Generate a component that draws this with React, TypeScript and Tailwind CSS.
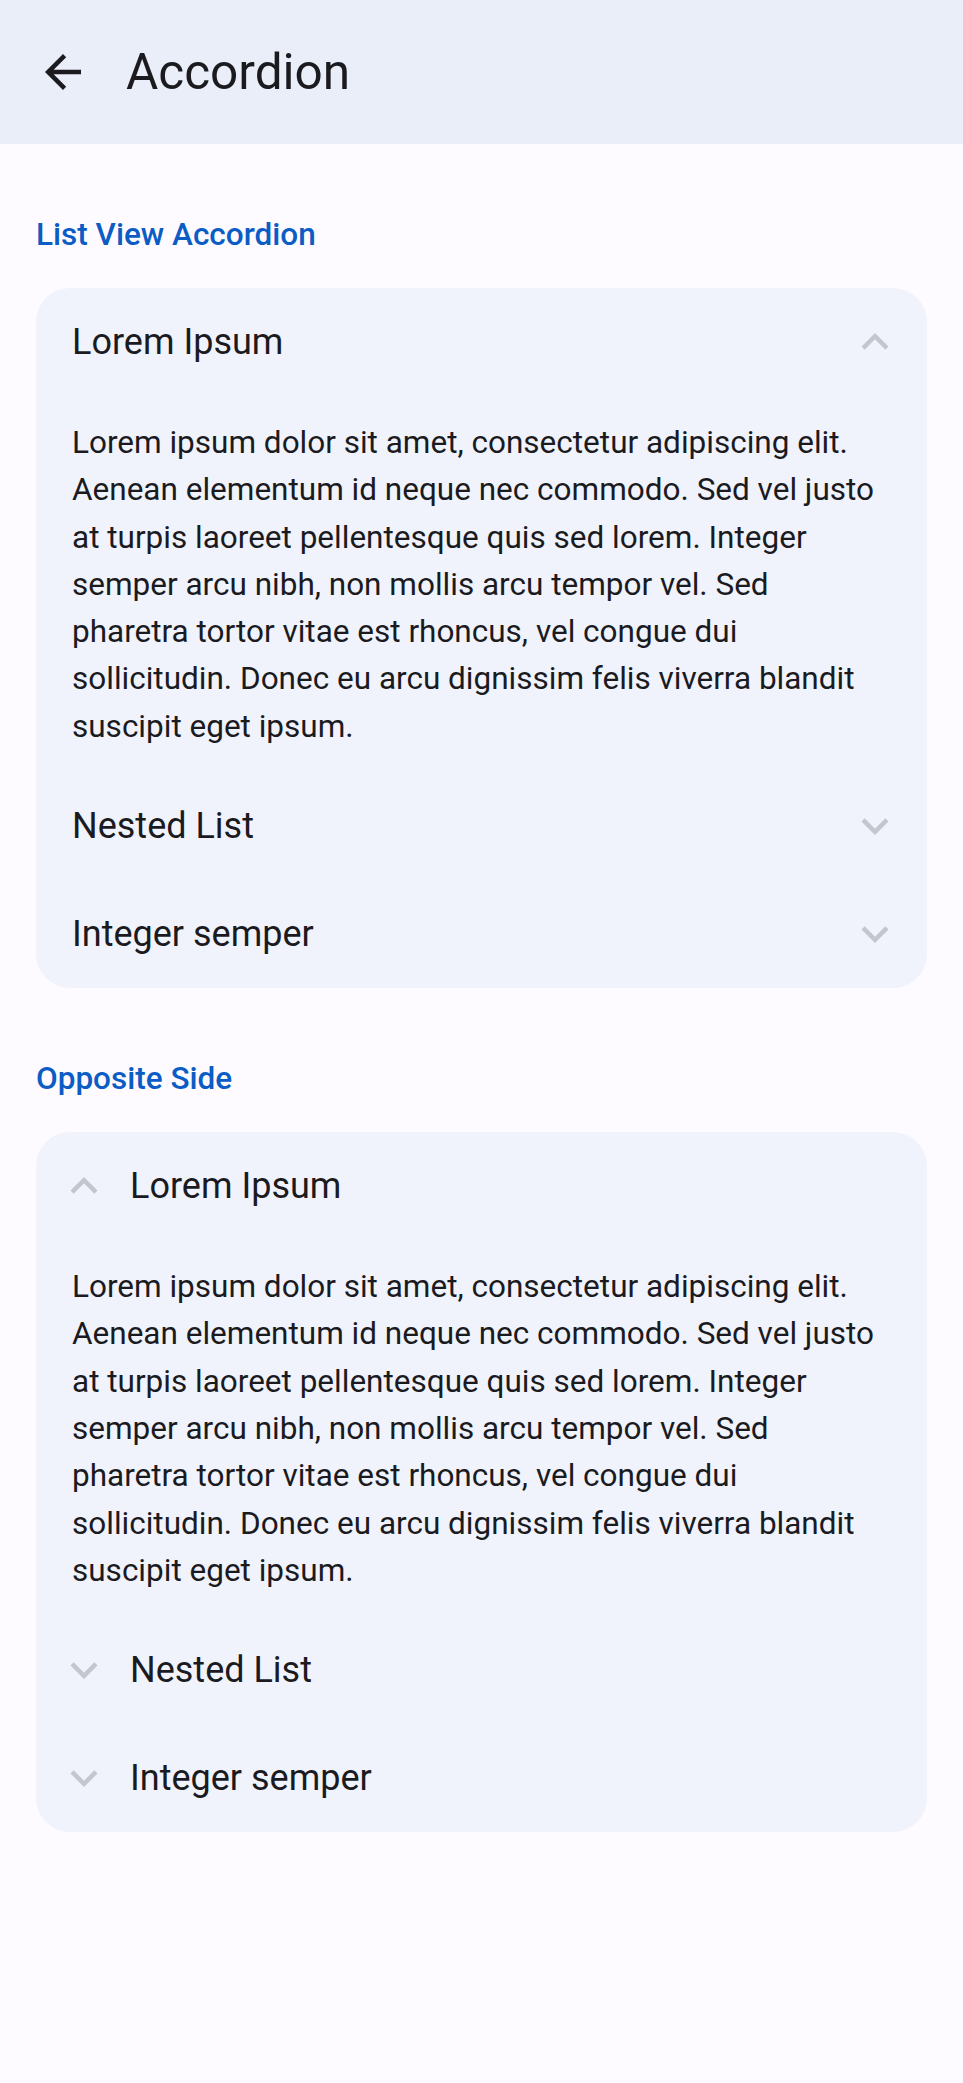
const body =
  "Lorem ipsum dolor sit amet, consectetur adipiscing elit. Aenean elementum id neque nec commodo. Sed vel justo at turpis laoreet pellentesque quis sed lorem. Integer semper arcu nibh, non mollis arcu tempor vel. Sed pharetra tortor vitae est rhoncus, vel congue dui sollicitudin. Donec eu arcu dignissim felis viverra blandit suscipit eget ipsum.";

const Chevron = ({ up }: { up?: boolean }) => (
  <svg viewBox="0 0 24 24" className="w-[54px] h-[54px] shrink-0 fill-[#c3c6ce]">
    {up ? (
      <path d="M12 8l-6 6 1.41 1.41L12 10.83l4.59 4.58L18 14z" />
    ) : (
      <path d="M16.59 8.59L12 13.17 7.41 8.59 6 10l6 6 6-6z" />
    )}
  </svg>
);

const Row = ({ title, up, left }: { title: string; up?: boolean; left?: boolean }) =>
  left ? (
    <div className="flex items-center h-[108px] pl-[21px] gap-[19px]">
      <Chevron up={up} />
      <span className="text-[36px] text-[#1b1b1f]">{title}</span>
    </div>
  ) : (
    <div className="flex items-center justify-between h-[108px] pl-[36px] pr-[25px]">
      <span className="text-[36px] text-[#1b1b1f]">{title}</span>
      <Chevron up={up} />
    </div>
  );

const Card = ({ left }: { left?: boolean }) => (
  <div className="rounded-[34px] bg-[#f0f3fc] overflow-hidden">
    <Row title="Lorem Ipsum" up left={left} />
    <p className="px-[36px] pt-[23px] pb-[22px] text-[31.5px] leading-[47.3px] text-[#1b1b1f]">
      {body}
    </p>
    <Row title="Nested List" left={left} />
    <Row title="Integer semper" left={left} />
  </div>
);

const Section = ({ label, left }: { label: string; left?: boolean }) => (
  <section className="pt-[73px]">
    <h2 className="text-[31.5px] leading-[36px] font-medium text-[#0b5cc5] mb-[35px]">{label}</h2>
    <Card left={left} />
  </section>
);

export default function App() {
  return (
    <div className="min-h-screen bg-[#fdfbff] font-['Roboto',sans-serif]">
      <header className="h-[144px] bg-[#e9eef9] flex items-center pl-[36px] gap-[36px]">
        <svg viewBox="0 0 24 24" className="w-[54px] h-[54px] fill-[#1b1b1f]">
          <path d="M20 11H7.83l5.59-5.59L12 4l-8 8 8 8 1.41-1.41L7.83 13H20v-2z" />
        </svg>
        <h1 className="text-[49.5px] text-[#1b1b1f]">Accordion</h1>
      </header>
      <main className="px-[36px]">
        <Section label="List View Accordion" />
        <Section label="Opposite Side" left />
      </main>
    </div>
  );
}
